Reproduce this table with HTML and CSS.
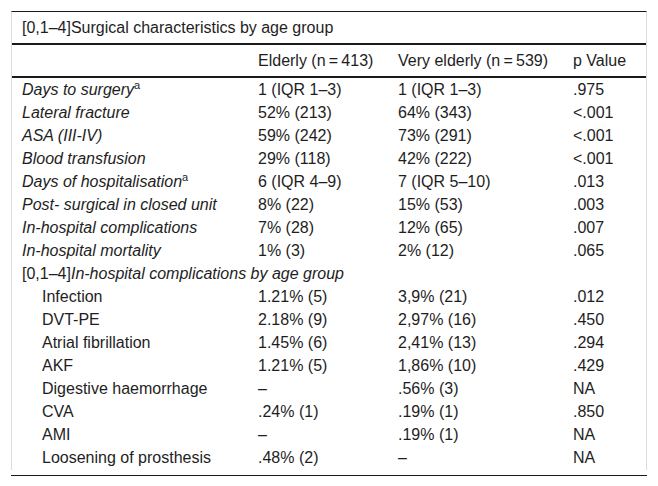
FILE: index.html
```html
<!DOCTYPE html>
<html lang="en">
<head>
<meta charset="utf-8">
<title>Surgical characteristics by age group</title>
<link rel="stylesheet" href="styles.css">
</head>
<body>
<div class="wrap">
  <div class="box">
    <table class="tbl">
      <colgroup>
        <col class="c1"><col class="c2"><col class="c3"><col class="c4">
      </colgroup>
      <thead>
        <tr class="cap"><th colspan="4">[0,1–4]Surgical characteristics by age group</th></tr>
        <tr class="head"><th></th><th>Elderly (n&#8201;=&#8201;413)</th><th>Very elderly (n&#8201;=&#8201;539)</th><th>p Value</th></tr>
      </thead>
      <tbody>
        <tr><td class="lab">Days to surgery<sup>a</sup></td><td>1 (IQR 1–3)</td><td>1 (IQR 1–3)</td><td>.975</td></tr>
        <tr><td class="lab">Lateral fracture</td><td>52% (213)</td><td>64% (343)</td><td>&lt;.001</td></tr>
        <tr><td class="lab">ASA (III-IV)</td><td>59% (242)</td><td>73% (291)</td><td>&lt;.001</td></tr>
        <tr><td class="lab">Blood transfusion</td><td>29% (118)</td><td>42% (222)</td><td>&lt;.001</td></tr>
        <tr><td class="lab">Days of hospitalisation<sup>a</sup></td><td>6 (IQR 4–9)</td><td>7 (IQR 5–10)</td><td>.013</td></tr>
        <tr><td class="lab">Post- surgical in closed unit</td><td>8% (22)</td><td>15% (53)</td><td>.003</td></tr>
        <tr><td class="lab">In-hospital complications</td><td>7% (28)</td><td>12% (65)</td><td>.007</td></tr>
        <tr><td class="lab">In-hospital mortality</td><td>1% (3)</td><td>2% (12)</td><td>.065</td></tr>
        <tr><td colspan="4">[0,1–4]<em>In-hospital complications by age group</em></td></tr>
        <tr><td class="sub">Infection</td><td>1.21% (5)</td><td>3,9% (21)</td><td>.012</td></tr>
        <tr><td class="sub">DVT-PE</td><td>2.18% (9)</td><td>2,97% (16)</td><td>.450</td></tr>
        <tr><td class="sub">Atrial fibrillation</td><td>1.45% (6)</td><td>2,41% (13)</td><td>.294</td></tr>
        <tr><td class="sub">AKF</td><td>1.21% (5)</td><td>1,86% (10)</td><td>.429</td></tr>
        <tr><td class="sub">Digestive haemorrhage</td><td>–</td><td>.56% (3)</td><td>NA</td></tr>
        <tr><td class="sub">CVA</td><td>.24% (1)</td><td>.19% (1)</td><td>.850</td></tr>
        <tr><td class="sub">AMI</td><td>–</td><td>.19% (1)</td><td>NA</td></tr>
        <tr><td class="sub">Loosening of prosthesis</td><td>.48% (2)</td><td>–</td><td>NA</td></tr>
      </tbody>
    </table>
  </div>
  <div class="rule"></div>
</div>
</body>
</html>
```
FILE: styles.css
```css
html, body {
  margin: 0;
  padding: 0;
  background: #fff;
}

body {
  font-family: "Liberation Sans", Arial, sans-serif;
  font-size: 16px;
  color: #1e1e1e;
}

.wrap {
  margin: 11px 0 0 11px;
  width: 636px;
}

.box {
  border-top: 1px solid #1a1a1a;
  border-left: 1px solid #dcdcdc;
  border-right: 1px solid #dcdcdc;
  padding-bottom: 1px;
}

.tbl {
  width: 100%;
  border-collapse: collapse;
  table-layout: fixed;
}

.c1 { width: 236px; }
.c2 { width: 140px; }
.c3 { width: 175px; }
.c4 { width: 83px; }

.tbl th,
.tbl td {
  padding: 0 10px;
  text-align: left;
  font-weight: normal;
  white-space: nowrap;
}

.tbl td {
  height: 23px;
  line-height: 23px;
}

.cap th,
.head th {
  height: 31px;
  line-height: 31px;
  border-bottom: 2px solid #1a1a1a;
}

.lab,
.tbl em {
  font-style: italic;
}

.tbl .sub {
  padding-left: 30px;
}

sup {
  font-size: 11px;
  font-style: normal;
  line-height: 0;
  vertical-align: 6px;
}

.rule {
  margin-top: 5px;
  border-top: 1px solid #1a1a1a;
}
```
